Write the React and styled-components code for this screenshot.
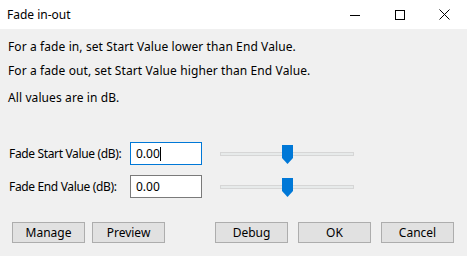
import React from 'react';
import styled, { createGlobalStyle } from 'styled-components';

const GlobalStyle = createGlobalStyle`
    html, body {
        margin: 0;
        padding: 0;
        background: #f0f0f0;
    }
    body {
        font-family: "Noto Sans", "Open Sans", sans-serif;
        font-size: 12px;
        color: #000;
    }
`;

const Window = styled.div`
    width: 467px;
    height: 256px;
    display: flex;
    flex-direction: column;
    overflow: hidden;
`;

const TitleBar = styled.div`
    height: 29px;
    background: #ffffff;
    display: flex;
    align-items: center;
`;

const Title = styled.div`
    flex: 1;
    padding-left: 7px;
    font-size: 12px;
`;

const CaptionButton = styled.div`
    width: 45px;
    height: 29px;
    display: flex;
    align-items: center;
    justify-content: center;
`;

const Body = styled.div`
    flex: 1;
    background: #f0f0f0;
    padding: 10px 13px 0 8px;
`;

const Message = styled.p`
    margin: ${p => p.$top || 0}px 0 0 0;
    line-height: 16px;
    letter-spacing: 0.1px;
    white-space: nowrap;
`;

const Form = styled.div`
    display: grid;
    grid-template-columns: 122px 72px 152px;
    grid-auto-rows: 23px;
    row-gap: 10px;
    margin-top: 36px;
    align-items: center;
`;

const Label = styled.label`
    padding-left: 1px;
    letter-spacing: -0.35px;
    white-space: nowrap;
`;

const TextBox = styled.div`
    box-sizing: border-box;
    height: 23px;
    background: #ffffff;
    border: 1px solid ${p => (p.$focused ? '#0078d7' : '#7a7a7a')};
    padding-left: 5px;
    display: flex;
    align-items: center;
`;

const Caret = styled.span`
    display: inline-block;
    width: 1px;
    height: 14px;
    background: #000;
`;

const Slider = styled.div`
    position: relative;
    height: 23px;
    margin-left: 18px;
`;

const Track = styled.div`
    box-sizing: border-box;
    margin-top: 10px;
    height: 4px;
    background: #e7eaea;
    border: 1px solid #d6d6d6;
`;

const Thumb = styled.svg`
    position: absolute;
    top: 3px;
    left: 62px;
`;

const Footer = styled.div`
    display: flex;
    justify-content: space-between;
    margin: 24px 0 0 4px;
`;

const ButtonGroup = styled.div`
    display: flex;
    gap: ${p => p.$gap}px;
`;

const Button = styled.button`
    box-sizing: border-box;
    width: 73px;
    height: 21px;
    padding: 0;
    background: #e1e1e1;
    border: 1px solid #adadad;
    border-radius: 0;
    font-family: inherit;
    font-size: 12px;
    color: #000;
`;

function ValueSlider() {
    return (
        <Slider>
            <Track />
            <Thumb width="11" height="19" viewBox="0 0 11 19">
                <path d="M0 0 H11 V13 L5.5 19 L0 13 Z" fill="#0078d7" />
            </Thumb>
        </Slider>
    );
}

export default function App() {
    return (
        <Window>
            <GlobalStyle />
            <TitleBar>
                <Title>Fade in-out</Title>
                <CaptionButton>
                    <svg width="10" height="10" viewBox="0 0 10 10">
                        <path d="M0 5.5 H10" stroke="#000" strokeWidth="1" />
                    </svg>
                </CaptionButton>
                <CaptionButton>
                    <svg width="10" height="10" viewBox="0 0 10 10">
                        <rect x="0.5" y="0.5" width="9" height="9" fill="none" stroke="#000" strokeWidth="1" />
                    </svg>
                </CaptionButton>
                <CaptionButton>
                    <svg width="11" height="11" viewBox="0 0 11 11">
                        <path d="M0.5 0.5 L10.5 10.5 M10.5 0.5 L0.5 10.5" stroke="#000" strokeWidth="1" />
                    </svg>
                </CaptionButton>
            </TitleBar>
            <Body>
                <Message>For a fade in, set Start Value lower than End Value.</Message>
                <Message $top={8}>For a fade out, set Start Value higher than End Value.</Message>
                <Message $top={11}>All values are in dB.</Message>
                <Form>
                    <Label>Fade Start Value (dB):</Label>
                    <TextBox $focused>0.00<Caret /></TextBox>
                    <ValueSlider />
                    <Label>Fade End Value (dB):</Label>
                    <TextBox>0.00</TextBox>
                    <ValueSlider />
                </Form>
                <Footer>
                    <ButtonGroup $gap={7}>
                        <Button>Manage</Button>
                        <Button>Preview</Button>
                    </ButtonGroup>
                    <ButtonGroup $gap={10}>
                        <Button>Debug</Button>
                        <Button>OK</Button>
                        <Button>Cancel</Button>
                    </ButtonGroup>
                </Footer>
            </Body>
        </Window>
    );
}
